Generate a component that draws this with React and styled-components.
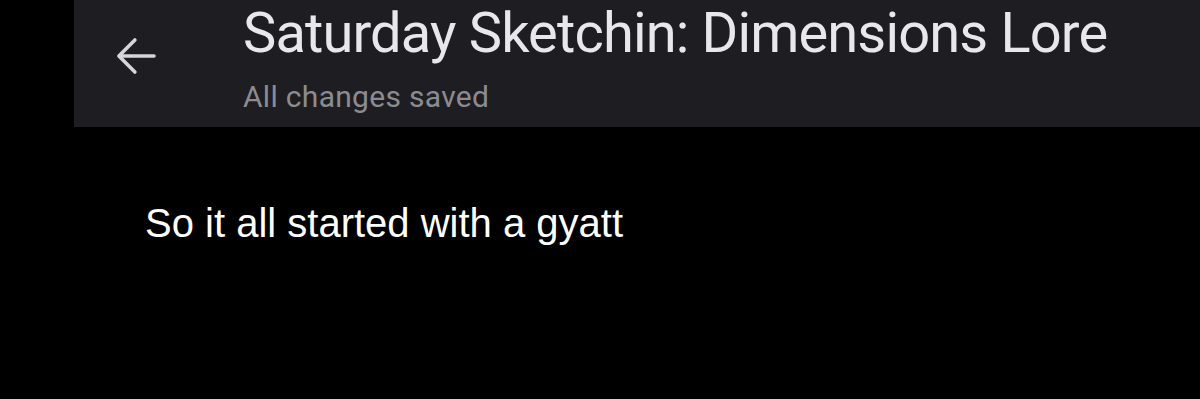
import React from "react";
import styled, { createGlobalStyle } from "styled-components";

const Global = createGlobalStyle`
  html, body { margin: 0; padding: 0; background: #000; }
  body { font-family: Roboto, "Noto Sans", sans-serif; }
`;

const Page = styled.div`
  width: 1200px;
  height: 399px;
  background: #000;
  overflow: hidden;
`;

const Header = styled.header`
  margin-left: 74px;
  height: 127px;
  background: #1e1e22;
  display: flex;
  align-items: flex-start;
`;

const BackButton = styled.button`
  margin: 29px 0 0 35px;
  width: 54px;
  height: 54px;
  padding: 0;
  border: 0;
  background: transparent;
  color: #d6d6da;
  display: flex;
  align-items: center;
  justify-content: center;
  svg { display: block; }
`;

const TitleBlock = styled.div`
  margin-left: 80px;
  padding-top: 5px;
  display: flex;
  flex-direction: column;
`;

const Title = styled.h1`
  margin: 0;
  font-family: Roboto, "Noto Sans", sans-serif;
  font-weight: 400;
  font-size: 56px;
  line-height: 56px;
  letter-spacing: -0.85px;
  color: #e8e8ec;
  white-space: nowrap;
`;

const Status = styled.div`
  margin-top: 19px;
  font-family: Roboto, "Noto Sans", sans-serif;
  font-size: 30px;
  line-height: 34px;
  letter-spacing: 0.3px;
  color: #8c8c90;
`;

const Body = styled.main`
  padding: 73px 0 0 145px;
`;

const Paragraph = styled.p`
  margin: 0;
  font-family: "Liberation Sans", Arial, sans-serif;
  font-size: 40px;
  line-height: 46px;
  color: #fff;
`;

export default function App() {
  return (
    <Page>
      <Global />
      <Header>
        <BackButton aria-label="Back">
          <svg width="54" height="54" viewBox="0 0 24 24" fill="none">
            <path
              d="M20 12H4.6M11.5 4.9L4.4 12l7.1 7.1"
              stroke="currentColor"
              strokeWidth="1.6"
              strokeLinecap="round"
              strokeLinejoin="round"
            />
          </svg>
        </BackButton>
        <TitleBlock>
          <Title>Saturday Sketchin: Dimensions Lore</Title>
          <Status>All changes saved</Status>
        </TitleBlock>
      </Header>
      <Body>
        <Paragraph>So it all started with a gyatt</Paragraph>
      </Body>
    </Page>
  );
}
